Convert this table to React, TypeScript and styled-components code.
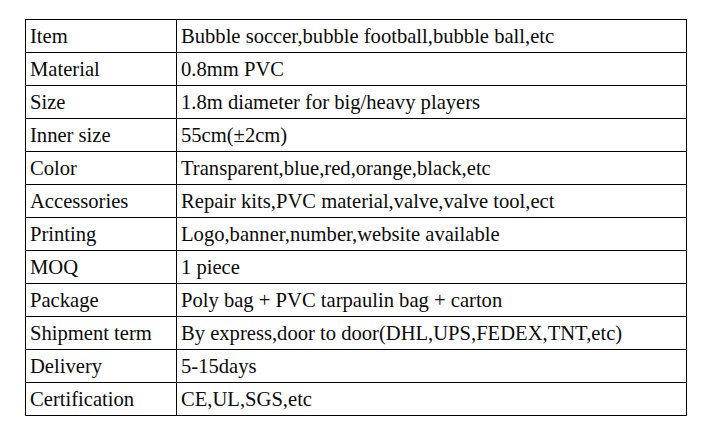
import styled, { createGlobalStyle } from "styled-components";

const GlobalStyle = createGlobalStyle`
  html, body {
    margin: 0;
    padding: 0;
    background: #ffffff;
  }
`;

const Page = styled.div`
  width: 720px;
  height: 448px;
  padding: 19px 0 0 25px;
  box-sizing: border-box;
`;

const Table = styled.table`
  border-collapse: collapse;
  width: 662px;
  font-family: "Liberation Serif", "Times New Roman", serif;
  font-size: 20.6px;
  color: #0a0a0a;
  table-layout: fixed;
`;

const Cell = styled.td<{ $label?: boolean }>`
  border: 1px solid #000000;
  height: 32px;
  padding: 0 0 0 4px;
  width: ${({ $label }) => ($label ? "146px" : "auto")};
  white-space: nowrap;
  vertical-align: middle;
  line-height: 22px;
`;

const rows: [string, string][] = [
  ["Item", "Bubble soccer,bubble football,bubble ball,etc"],
  ["Material", "0.8mm PVC"],
  ["Size", "1.8m diameter for big/heavy players"],
  ["Inner size", "55cm(±2cm)"],
  ["Color", "Transparent,blue,red,orange,black,etc"],
  ["Accessories", "Repair kits,PVC material,valve,valve tool,ect"],
  ["Printing", "Logo,banner,number,website available"],
  ["MOQ", "1 piece"],
  ["Package", "Poly bag + PVC tarpaulin bag + carton"],
  ["Shipment term", "By express,door to door(DHL,UPS,FEDEX,TNT,etc)"],
  ["Delivery", "5-15days"],
  ["Certification", "CE,UL,SGS,etc"],
];

export default function App() {
  return (
    <>
      <GlobalStyle />
      <Page>
        <Table>
          <tbody>
            {rows.map(([label, value]) => (
              <tr key={label}>
                <Cell $label>{label}</Cell>
                <Cell>{value}</Cell>
              </tr>
            ))}
          </tbody>
        </Table>
      </Page>
    </>
  );
}
